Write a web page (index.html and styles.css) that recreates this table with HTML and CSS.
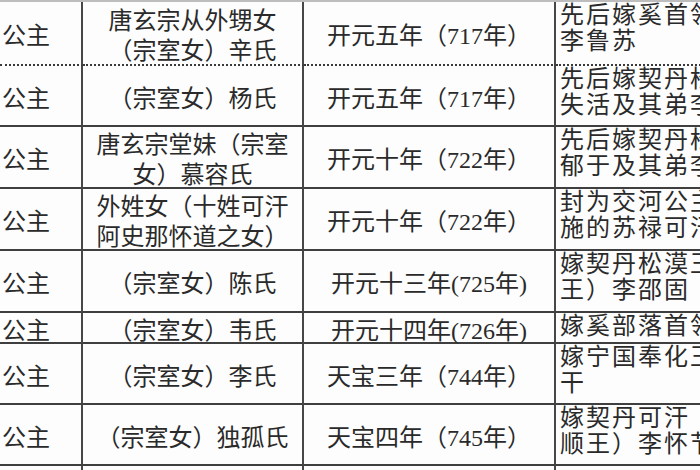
FILE: index.html
```html
<!DOCTYPE html>
<html lang="zh-CN">
<head>
<meta charset="utf-8">
<title>唐代和亲公主</title>
<link rel="stylesheet" href="styles.css">
</head>
<body>
<div class="sheet">
  <div class="grid">
    <div class="cell c1 r-dash">公主</div>
    <div class="cell c2 r-dash">唐玄宗从外甥女<br>（宗室女）辛氏</div>
    <div class="cell c3 r-dash">开元五年（717年）</div>
    <div class="cell c4 r-dash">先后嫁奚首领李大酺、<br>李鲁苏</div>

    <div class="cell c1">公主</div>
    <div class="cell c2">（宗室女）杨氏</div>
    <div class="cell c3">开元五年（717年）</div>
    <div class="cell c4">先后嫁契丹松漠都督李<br>失活及其弟李娑固</div>

    <div class="cell c1">公主</div>
    <div class="cell c2">唐玄宗堂妹（宗室<br>女）慕容氏</div>
    <div class="cell c3">开元十年（722年）</div>
    <div class="cell c4">先后嫁契丹松漠都督李<br>郁于及其弟李吐于</div>

    <div class="cell c1">公主</div>
    <div class="cell c2">外姓女（十姓可汗<br>阿史那怀道之女）</div>
    <div class="cell c3">开元十年（722年）</div>
    <div class="cell c4">封为交河公主，嫁突骑<br>施的苏禄可汗</div>

    <div class="cell c1">公主</div>
    <div class="cell c2">（宗室女）陈氏</div>
    <div class="cell c3">开元十三年(725年)</div>
    <div class="cell c4">嫁契丹松漠王（广化郡<br>王）李邵固</div>

    <div class="cell c1">公主</div>
    <div class="cell c2">（宗室女）韦氏</div>
    <div class="cell c3">开元十四年(726年)</div>
    <div class="cell c4">嫁奚部落首领李鲁苏</div>

    <div class="cell c1">公主</div>
    <div class="cell c2">（宗室女）李氏</div>
    <div class="cell c3">天宝三年（744年）</div>
    <div class="cell c4">嫁宁国奉化王阿悉烂达<br>干</div>

    <div class="cell c1">公主</div>
    <div class="cell c2">（宗室女）独孤氏</div>
    <div class="cell c3">天宝四年（745年）</div>
    <div class="cell c4">嫁契丹可汗（松漠都督<br>顺王）李怀节</div>

    <div class="cell c1"></div>
    <div class="cell c2"></div>
    <div class="cell c3"></div>
    <div class="cell c4"></div>
  </div>
</div>
</body>
</html>
```

FILE: styles.css
```css
html, body {
  margin: 0;
  padding: 0;
  background: #fdfdfd;
  overflow: hidden;
}

.sheet {
  width: 840px;
  border-top: 2px solid #bdbdbd;
  font-family: "Liberation Serif", "Noto Sans CJK SC", serif;
  font-size: 24px;
  color: #2a2a2a;
}

.grid {
  display: grid;
  grid-template-columns: 83px 221px 252px 284px;
  grid-template-rows: 64px 61px 62px 62px 62px 31px 61px 61px 20px;
}

.cell {
  box-sizing: border-box;
  border-right: 2px solid #474747;
  border-bottom: 2px solid #3f3f3f;
  display: flex;
  align-items: center;
  line-height: 30px;
  padding-top: 6px;
  white-space: nowrap;
}

.r-dash {
  border-bottom: 2px dotted #3a3a3a;
}

.c1 {
  justify-content: flex-start;
  padding-left: 2px;
}

.c2,
.c3 {
  justify-content: center;
  text-align: center;
}

.c4 {
  align-items: flex-start;
  padding-top: 0;
  padding-left: 4px;
  line-height: 26px;
  letter-spacing: 2px;
  border-right: none;
}
```
